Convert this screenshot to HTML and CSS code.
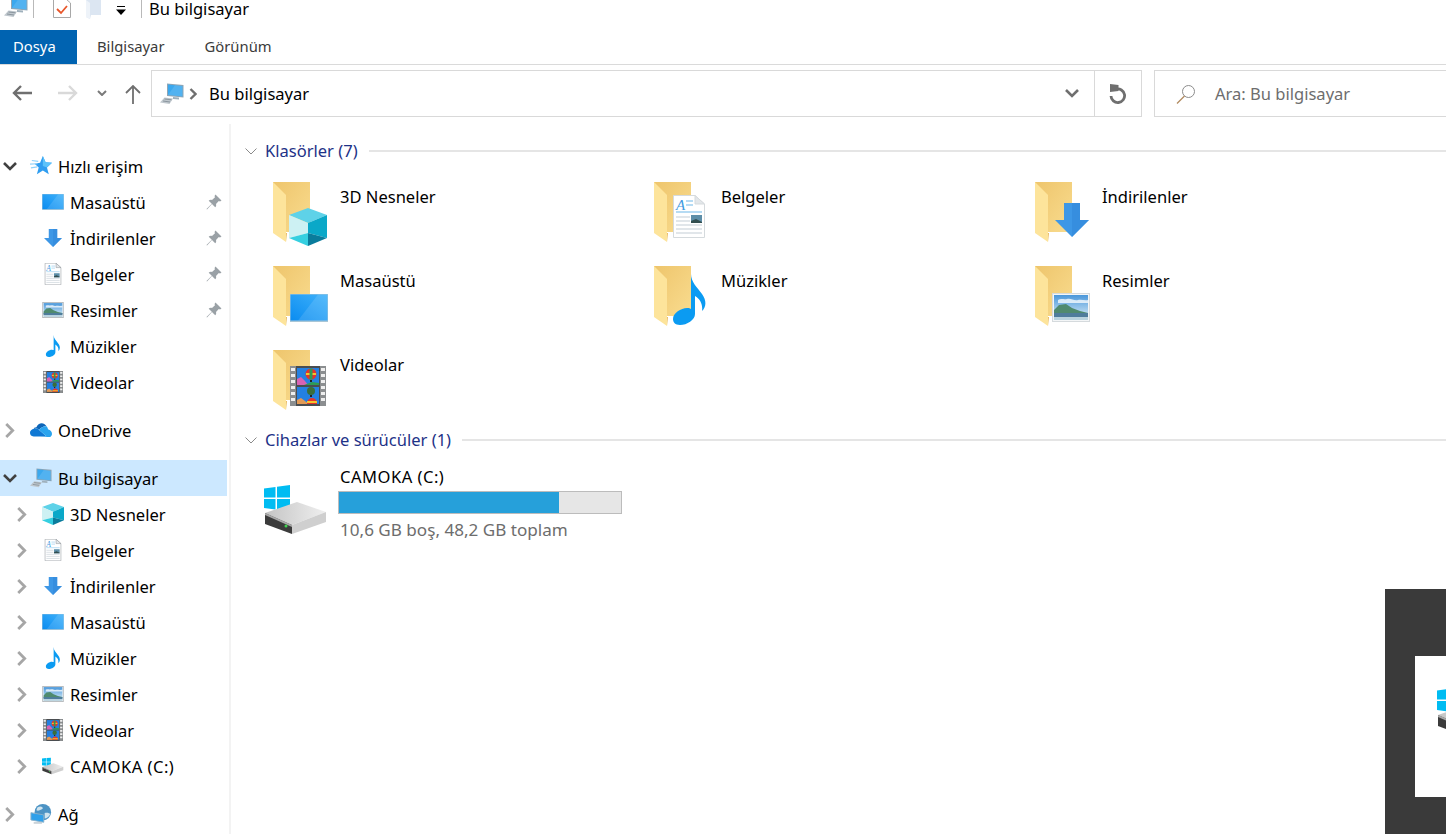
FILE: index.html
```html
<!DOCTYPE html>
<html lang="tr">

<head>
  <meta charset="UTF-8">
  <title>Bu bilgisayar</title>
  <link rel="stylesheet" href="styles.css">
</head>

<body>
  <!-- Shared icons -->
  <svg class="icon-defs" xmlns="http://www.w3.org/2000/svg">
    <defs>
      <linearGradient id="g-folder-back" x1="0" y1="0" x2="1" y2="1">
        <stop offset="0" stop-color="#eec56c" />
        <stop offset="1" stop-color="#f9dc8f" />
      </linearGradient>
      <linearGradient id="g-screen" x1="0" y1="1" x2="1" y2="0">
        <stop offset="0" stop-color="#0b8cf0" />
        <stop offset="1" stop-color="#3fb2fb" />
      </linearGradient>
      <linearGradient id="g-sky" x1="0" y1="0" x2="0" y2="1">
        <stop offset="0" stop-color="#4a97da" />
        <stop offset="1" stop-color="#e4f3fa" />
      </linearGradient>
      <linearGradient id="g-disk" x1="0" y1="0" x2="1" y2="0">
        <stop offset="0" stop-color="#c4c4c4" />
        <stop offset="1" stop-color="#efefef" />
      </linearGradient>
    </defs>
    <symbol id="folder" viewBox="0 0 58 66">
      <path d="M0 1H37V51H13V50L0 44Z" fill="url(#g-folder-back)" />
      <path d="M0 1L13 14V61L0 52Z" fill="#fde49b" />
      <path d="M13 14V61L14 52H13Z" fill="#e8b95e" />
    </symbol>
    <symbol id="cube" viewBox="0 0 38 38">
      <path d="M19 0L38 7L19 15L0 7Z" fill="#5ed2e8" />
      <path d="M0 7L19 15V25L0 30Z" fill="#cdf1f3" />
      <path d="M38 7L19 15V25L38 30Z" fill="#0aa8c8" />
      <path d="M0 30L19 25V38Z" fill="#35cfe0" />
      <path d="M38 30L19 25V38Z" fill="#0a7c9c" />
    </symbol>
    <symbol id="monitor" viewBox="0 0 38 28">
      <rect width="38" height="28" fill="#a9c6d6" />
      <rect x="0.5" y="0.5" width="37" height="26" fill="url(#g-screen)" />
      <path d="M8 26.500L28 0.500H37.500V26.500Z" fill="#fff" opacity="0.12" />
    </symbol>
    <symbol id="arrow-down" viewBox="0 0 34 34">
      <path d="M9 0H25V17H34L17 34L0 17H9Z" fill="#3d97e6" />
      <path d="M17 0H25V17H34L17 34Z" fill="#2f86d8" opacity="0.5" />
    </symbol>
    <symbol id="doc" viewBox="0 0 32 43">
      <path d="M0.500 0.500H22L31.500 9V42.500H0.500Z" fill="#fff" stroke="currentColor" />
      <path d="M22 0.500V9H31.500Z" fill="#e3e7ea" stroke="currentColor" />
      <text x="3" y="15" class="doc-letter">A</text>
      <path d="M13 6H20M13 10H20M3 17H29" stroke="#9fd0ef" stroke-width="1.400" />
      <path d="M3 22H17M3 26H17M3 30H29M3 34H29M3 38H29" stroke="#c4ced5" stroke-width="1.200" />
      <rect x="18" y="20" width="11" height="8" fill="#5d8ea8" />
      <path d="M18 26L23 24L29 27V28H18Z" fill="#324e4f" />
    </symbol>
    <symbol id="picture" viewBox="0 0 38 29">
      <rect x="0.500" y="0.500" width="37" height="28" fill="#f4f6f7" stroke="currentColor" />
      <rect x="2" y="2" width="34" height="25" fill="url(#g-sky)" />
      <path d="M6 7C9 5 12 7 15 6C19 5 22 8 26 7C29 6 33 8 36 7V10H6Z" fill="#fff" opacity="0.75" />
      <path d="M2 17L7 12L14 11L20 15L28 18L36 20V22H2Z" fill="#4f8a6e" />
      <rect x="2" y="20" width="34" height="4" fill="#4f7d9c" />
      <path d="M2 24H36V27H2Z" fill="#b9d3de" />
    </symbol>
    <symbol id="note" viewBox="0 0 33 51">
      <path d="M18 0C18 8 24 13 29 20C34 27 33 33 29 37C30 30 27 25 22 22V40C22 46 14 51 7 51C2 51 0 48 0 45C0 39 8 34 14 34C16 34 17.500 34.500 18 35Z" fill="#0b9bf2" />
    </symbol>
    <symbol id="film" viewBox="0 0 36 40">
      <rect width="36" height="40" fill="#4a4d50" />
      <rect width="6" height="40" fill="#8b8e90" />
      <rect x="30" width="6" height="40" fill="#8b8e90" />
      <path d="M1 2h4v3H1zM1 8h4v3H1zM1 14h4v3H1zM1 20h4v3H1zM1 26h4v3H1zM1 32h4v3H1zM31 2h4v3h-4zM31 8h4v3h-4zM31 14h4v3h-4zM31 20h4v3h-4zM31 26h4v3h-4zM31 32h4v3h-4z" fill="#eeeeee" />
      <rect x="7" y="2" width="22" height="17" fill="#2480e2" />
      <rect x="7" y="21" width="22" height="17" fill="#2480e2" />
      <path d="M7 19V13L11 11L15 15L18 19Z" fill="#d763b4" />
      <path d="M14 19L22 16L29 17V19Z" fill="#2f9a55" />
      <path d="M7 38V34L11 32L15 35L19 38Z" fill="#e39a56" />
      <circle cx="21" cy="8" r="5.500" fill="#e5342c" />
      <path d="M16 7H26V9H16Z" fill="#f2c62e" />
      <path d="M19.500 2.500H22.500V13.500H19.500Z" fill="#2f9a55" />
      <path d="M20 14H22V16H20Z" fill="#222" />
      <circle cx="21" cy="25" r="4" fill="#3b6e3a" />
      <path d="M20 29H22V31H20Z" fill="#222" />
      <circle cx="22" cy="37" r="5" fill="#e5342c" />
      <path d="M17 35H27V37H17Z" fill="#f2c62e" />
      <rect x="7" y="38" width="22" height="2" fill="#4a4d50" />
    </symbol>
    <symbol id="star" viewBox="0 0 24 22">
      <path d="M14 0L17 7L24 7.500L18.500 12.500L20.500 20L14 16L7.500 20L9.500 12.500L5 8.500L11 7.500Z" fill="#2f9df0" />
      <path d="M14 0L17 7L24 7.500L18.500 12.500L14 11Z" fill="#5cc2fa" />
      <path d="M0 9L8 8.500M1 13L8 12M2 5L9 6" stroke="#8fd2fa" stroke-width="1.200" />
    </symbol>
    <symbol id="pin" viewBox="0 0 16 16">
      <path d="M9.500 0.500L15.500 6.500L14 7.500L12.800 7L10 10C10.500 11.500 10 12.500 9.200 13.300L6 10L1 15.500L0.500 15L5.800 9.800L2.700 6.800C3.500 6 4.500 5.500 6 6L9 3.200L8.500 2Z" fill="#9aa1a6" />
    </symbol>
    <symbol id="cloud" viewBox="0 0 24 16">
      <path d="M7 5C9 0 15 -1 18 4C14 4 11 6 10 8C8 6 6 6 4 7C4 6 5 5 7 5Z" fill="#0d65b8" />
      <path d="M4 7C6 6 8 6 10 8L18 15H4C1 15 0 13 0 11C0 9 2 7 4 7Z" fill="#0f78d4" />
      <path d="M10 8C11 6 14 4 18 4C20 6 19 7 20 7.500C22 8 24 10 24 12C24 14 23 15 22 15.500H11L18 15Z" fill="#2aa4ee" />
    </symbol>
    <symbol id="computer" viewBox="0 0 24 22">
      <path d="M7 0.500L23.500 2V14.500L7 13Z" fill="#8fa5b5" />
      <path d="M8 1.500L22.500 3V13.500L8 12Z" fill="#3ba8ee" />
      <path d="M8 12L15 2.200L22.500 3V13.500Z" fill="#fff" opacity="0.12" />
      <path d="M13 14L19 14.600V16.500L13 15.900Z" fill="#9fb0bc" />
      <path d="M4.500 14.500L13 15.500L9.500 21L0 19.500Z" fill="#bfc7cd" />
      <path d="M4.500 16L11.500 16.800M3 18L10 19" stroke="#8b969e" />
    </symbol>
    <symbol id="winlogo" viewBox="0 0 26 26">
      <path d="M0 3.500L11.500 2V12.500H0ZM13 1.800L26 0V12.500H13ZM0 14H11.500V24.500L0 23ZM13 14H26V26L13 24.700Z" fill="#00bcf2" />
    </symbol>
    <symbol id="drive" viewBox="0 0 64 52">
      <use href="#winlogo" x="0" y="1" width="26" height="26" />
      <path d="M1 29L33 18L62 28L28 41Z" fill="url(#g-disk)" />
      <path d="M1 29L28 41V50L1 40Z" fill="#3b3b3b" />
      <path d="M28 41L62 28V38L28 50Z" fill="#cfcfcf" />
      <path d="M1 29L28 41V43L1 31Z" fill="#a8a8a8" />
      <circle cx="22" cy="42" r="1.500" fill="#3ed34f" />
    </symbol>
    <symbol id="network" viewBox="0 0 24 22">
      <circle cx="14" cy="9" r="9" fill="#4c93c4" />
      <path d="M8 4C11 2 14 3 14 5C11 7 9 8 7 7ZM16 10C19 9 21 10 22 11C21 14 18 16 16 16Z" fill="#cfe4ef" />
      <path d="M1 9.500L15 12V20L1 17.500Z" fill="#2fa0ea" stroke="#8ab0c8" />
      <path d="M4 20H13V21.500H4Z" fill="#b9c4cc" />
    </symbol>
  </svg>

  <!-- Title bar -->
  <header class="title-bar">
    <svg class="qa-computer" viewBox="0 0 24 18"><use href="#computer" y="-4" width="24" height="22" /></svg>
    <span class="qa-sep"></span>
    <svg class="qa-check" viewBox="0 0 18 18">
      <path d="M0.500 -1H13L17.500 3V17.500H0.500Z" fill="#fff" stroke="#a8a8a8" />
      <path d="M4 9L8 13L14 6" fill="none" stroke="#e8562a" stroke-width="1.800" />
    </svg>
    <svg class="qa-folder" viewBox="0 0 15 20">
      <path d="M0 0H15V15H5L4 19L0 17Z" fill="#dce6f2" />
      <path d="M0 0L4 3V19L0 17Z" fill="#eef3f9" />
    </svg>
    <svg class="qa-drop" viewBox="0 0 12 10">
      <path d="M2 0.500H10" stroke="#000" />
      <path d="M1 3.500H11L6 9Z" fill="#000" />
    </svg>
    <span class="qa-sep qa-sep-last"></span>
    <span class="title-text">Bu bilgisayar</span>
  </header>

  <!-- Ribbon tabs -->
  <nav class="ribbon">
    <a class="ribbon-tab ribbon-file">Dosya</a>
    <a class="ribbon-tab">Bilgisayar</a>
    <a class="ribbon-tab">Görünüm</a>
  </nav>

  <!-- Address row -->
  <div class="address-row">
    <div class="nav-buttons">
      <svg class="nav-back" viewBox="0 0 20 16"><path d="M9 1L2 8L9 15M2 8H20" fill="none" stroke="#6f6f6f" stroke-width="2.400" /></svg>
      <svg class="nav-forward" viewBox="0 0 20 16"><path d="M11 1L18 8L11 15M18 8H0" fill="none" stroke="#d9d9d9" stroke-width="2.400" /></svg>
      <svg class="nav-recent" viewBox="0 0 10 6"><path d="M1 1L5 5L9 1" fill="none" stroke="#7a7a7a" stroke-width="2" /></svg>
      <svg class="nav-up" viewBox="0 0 16 19"><path d="M1 8L8 1L15 8M8 1V19" fill="none" stroke="#6f6f6f" stroke-width="1.800" /></svg>
    </div>
    <div class="address-box">
      <svg class="address-icon"><use href="#computer" /></svg>
      <svg class="crumb-arrow" viewBox="0 0 8 12"><path d="M1.500 1L6.500 6L1.500 11" fill="none" stroke="#6f6f6f" stroke-width="2.400" /></svg>
      <span class="address-text">Bu bilgisayar</span>
      <svg class="address-drop" viewBox="0 0 14 9"><path d="M1 1L7 7L13 1" fill="none" stroke="#6f6f6f" stroke-width="2.600" /></svg>
      <span class="address-refresh">
        <svg viewBox="0 0 18 20"><path d="M7 5.200A6.800 6.800 0 1 1 2 12" fill="none" stroke="#6f6f6f" stroke-width="2.800" /><path d="M1 0L9.500 1V7L1 8Z" fill="#6f6f6f" /></svg>
      </span>
    </div>
    <div class="search-box">
      <svg viewBox="0 0 20 20"><circle cx="12.500" cy="7.500" r="6" fill="none" stroke="#8c8c8c" /><path d="M8.500 12L1 19.500" stroke="#b08a5f" stroke-width="1.200" /></svg>
      <span>Ara: Bu bilgisayar</span>
    </div>
  </div>

  <div class="explorer">
    <!-- Navigation tree -->
    <aside class="sidebar">
      <section class="tree-group">
        <div class="tree-row">
          <svg class="chev chev-open" viewBox="0 0 14 9"><path d="M1 1L7 7L13 1" /></svg>
          <svg class="tree-icon"><use href="#star" /></svg>
          <span>Hızlı erişim</span>
        </div>
        <div class="tree-row tree-child">
          <i class="chev-space"></i>
          <svg class="tree-icon" viewBox="0 0 22 16"><use href="#monitor" width="22" height="16" /></svg>
          <span>Masaüstü</span>
          <svg class="pin"><use href="#pin" /></svg>
        </div>
        <div class="tree-row tree-child">
          <i class="chev-space"></i>
          <svg class="tree-icon" viewBox="0 0 22 20"><use href="#arrow-down" x="2" width="18" height="20" /></svg>
          <span>İndirilenler</span>
          <svg class="pin"><use href="#pin" /></svg>
        </div>
        <div class="tree-row tree-child">
          <i class="chev-space"></i>
          <svg class="tree-icon" viewBox="0 0 22 22"><use href="#doc" x="2" width="18" height="22" /></svg>
          <span>Belgeler</span>
          <svg class="pin"><use href="#pin" /></svg>
        </div>
        <div class="tree-row tree-child">
          <i class="chev-space"></i>
          <svg class="tree-icon" viewBox="0 0 22 16"><use href="#picture" width="22" height="16" /></svg>
          <span>Resimler</span>
          <svg class="pin"><use href="#pin" /></svg>
        </div>
        <div class="tree-row tree-child">
          <i class="chev-space"></i>
          <svg class="tree-icon" viewBox="0 0 22 22"><use href="#note" x="3" width="16" height="22" /></svg>
          <span>Müzikler</span>
        </div>
        <div class="tree-row tree-child">
          <i class="chev-space"></i>
          <svg class="tree-icon"><use href="#film" /></svg>
          <span>Videolar</span>
        </div>
      </section>

      <section class="tree-group">
        <div class="tree-row">
          <svg class="chev" viewBox="0 0 9 14"><path d="M1 1L7 7L1 13" /></svg>
          <svg class="tree-icon" viewBox="0 0 24 22"><use href="#cloud" y="3" width="24" height="16" /></svg>
          <span>OneDrive</span>
        </div>
      </section>

      <section class="tree-group">
        <div class="tree-row tree-selected">
          <svg class="chev chev-open" viewBox="0 0 14 9"><path d="M1 1L7 7L13 1" /></svg>
          <svg class="tree-icon"><use href="#computer" /></svg>
          <span>Bu bilgisayar</span>
        </div>
        <div class="tree-row tree-child">
          <svg class="chev" viewBox="0 0 9 14"><path d="M1 1L7 7L1 13" /></svg>
          <svg class="tree-icon" viewBox="0 0 22 22"><use href="#cube" width="22" height="22" /></svg>
          <span>3D Nesneler</span>
        </div>
        <div class="tree-row tree-child">
          <svg class="chev" viewBox="0 0 9 14"><path d="M1 1L7 7L1 13" /></svg>
          <svg class="tree-icon" viewBox="0 0 22 22"><use href="#doc" x="2" width="18" height="22" /></svg>
          <span>Belgeler</span>
        </div>
        <div class="tree-row tree-child">
          <svg class="chev" viewBox="0 0 9 14"><path d="M1 1L7 7L1 13" /></svg>
          <svg class="tree-icon" viewBox="0 0 22 20"><use href="#arrow-down" x="2" width="18" height="20" /></svg>
          <span>İndirilenler</span>
        </div>
        <div class="tree-row tree-child">
          <svg class="chev" viewBox="0 0 9 14"><path d="M1 1L7 7L1 13" /></svg>
          <svg class="tree-icon" viewBox="0 0 22 16"><use href="#monitor" width="22" height="16" /></svg>
          <span>Masaüstü</span>
        </div>
        <div class="tree-row tree-child">
          <svg class="chev" viewBox="0 0 9 14"><path d="M1 1L7 7L1 13" /></svg>
          <svg class="tree-icon" viewBox="0 0 22 22"><use href="#note" x="3" width="16" height="22" /></svg>
          <span>Müzikler</span>
        </div>
        <div class="tree-row tree-child">
          <svg class="chev" viewBox="0 0 9 14"><path d="M1 1L7 7L1 13" /></svg>
          <svg class="tree-icon" viewBox="0 0 22 16"><use href="#picture" width="22" height="16" /></svg>
          <span>Resimler</span>
        </div>
        <div class="tree-row tree-child">
          <svg class="chev" viewBox="0 0 9 14"><path d="M1 1L7 7L1 13" /></svg>
          <svg class="tree-icon"><use href="#film" /></svg>
          <span>Videolar</span>
        </div>
        <div class="tree-row tree-child">
          <svg class="chev" viewBox="0 0 9 14"><path d="M1 1L7 7L1 13" /></svg>
          <svg class="tree-icon" viewBox="0 0 22 18"><use href="#drive" width="22" height="18" /></svg>
          <span class="drive-label">CAMOKA (C:)</span>
        </div>
      </section>

      <section class="tree-group">
        <div class="tree-row">
          <svg class="chev" viewBox="0 0 9 14"><path d="M1 1L7 7L1 13" /></svg>
          <svg class="tree-icon"><use href="#network" /></svg>
          <span>Ağ</span>
        </div>
      </section>
    </aside>

    <!-- Folder view -->
    <main class="content">
      <div class="group-head">
        <svg viewBox="0 0 12 7"><path d="M0.500 0.500L6 6L11.500 0.500" /></svg>
        <span>Klasörler (7)</span>
        <i></i>
      </div>
      <div class="tile-grid">
        <div class="tile">
          <svg class="folder-icon" viewBox="0 0 58 66"><use href="#folder" /><use href="#cube" x="16" y="27" width="38" height="38" /></svg>
          <span>3D Nesneler</span>
        </div>
        <div class="tile">
          <svg class="folder-icon" viewBox="0 0 58 66"><use href="#folder" /><use href="#doc" x="19" y="14" width="32" height="43" /></svg>
          <span>Belgeler</span>
        </div>
        <div class="tile">
          <svg class="folder-icon" viewBox="0 0 58 66"><use href="#folder" /><use href="#arrow-down" x="20" y="22" width="34" height="34" /></svg>
          <span>İndirilenler</span>
        </div>
        <div class="tile">
          <svg class="folder-icon" viewBox="0 0 58 66"><use href="#folder" /><use href="#monitor" x="17" y="29" width="38" height="28" /></svg>
          <span>Masaüstü</span>
        </div>
        <div class="tile">
          <svg class="folder-icon" viewBox="0 0 58 66"><use href="#folder" /><use href="#note" x="19" y="9" width="33" height="51" /></svg>
          <span>Müzikler</span>
        </div>
        <div class="tile">
          <svg class="folder-icon" viewBox="0 0 58 66"><use href="#folder" /><use href="#picture" x="17" y="28" width="38" height="29" /></svg>
          <span>Resimler</span>
        </div>
        <div class="tile">
          <svg class="folder-icon" viewBox="0 0 58 66"><use href="#folder" /><use href="#film" x="17" y="17" width="36" height="40" /></svg>
          <span>Videolar</span>
        </div>
      </div>

      <div class="group-head">
        <svg viewBox="0 0 12 7"><path d="M0.500 0.500L6 6L11.500 0.500" /></svg>
        <span>Cihazlar ve sürücüler (1)</span>
        <i></i>
      </div>
      <div class="drive-tile">
        <svg class="drive-icon"><use href="#drive" /></svg>
        <div class="drive-info">
          <div class="drive-name drive-label">CAMOKA (C:)</div>
          <div class="drive-bar"><div class="drive-used" style="width: 78%"></div></div>
          <div class="drive-free">10,6 GB boş, 48,2 GB toplam</div>
        </div>
      </div>
    </main>
  </div>

  <!-- Thumbnail of another window, cut off by the screen edge -->
  <div class="thumb">
    <div class="thumb-page">
      <svg class="thumb-logo"><use href="#drive" /></svg>
    </div>
  </div>
</body>

</html>
```
FILE: styles.css
```css
* {
  box-sizing: border-box;
}

html,
body {
  margin: 0;
  height: 834px;
  overflow: hidden;
}

body {
  position: relative;
  width: 1446px;
  background: #fff;
  color: #000;
  font-family: "Noto Sans", sans-serif;
  font-size: 16.55px;
}

svg {
  display: block;
  flex: none;
}

.icon-defs {
  position: absolute;
  width: 0;
  height: 0;
}

.doc-letter {
  font-family: "Liberation Serif", serif;
  font-style: italic;
  font-size: 15px;
  fill: #3f9be0;
}

/* Title bar */
.title-bar {
  display: flex;
  align-items: flex-start;
  height: 30px;
  overflow: hidden;
}

.qa-computer {
  width: 24px;
  height: 18px;
  margin-left: 4px;
}

.qa-sep {
  width: 1px;
  height: 18px;
  margin-left: 5px;
  background: #b9b9b9;
}

.qa-check {
  width: 18px;
  height: 18px;
  margin-left: 19px;
}

.qa-folder {
  width: 15px;
  height: 20px;
  margin-left: 15px;
}

.qa-drop {
  width: 12px;
  height: 10px;
  margin: 6px 0 0 14px;
}

.qa-sep-last {
  margin-left: 14px;
}

.title-text {
  margin-left: 7px;
  line-height: 18px;
}

/* Ribbon */
.ribbon {
  display: flex;
  height: 35px;
  border-bottom: 1px solid #dadada;
  font-size: 14.8px;
}

.ribbon-tab {
  display: flex;
  align-items: center;
  padding: 0 20px 2px;
  height: 34px;
  color: #3b3b3b;
}

.ribbon-file {
  width: 77px;
  padding: 0 0 2px 13px;
  background: #0063b1;
  color: #fff;
}

/* Address row */
.address-row {
  display: flex;
  height: 59px;
  padding-top: 5px;
}

.nav-buttons {
  flex: none;
  display: flex;
  align-items: flex-start;
  width: 151px;
  height: 46px;
  padding: 15px 0 0 12px;
}

.nav-back,
.nav-forward {
  width: 20px;
  height: 16px;
}

.nav-forward {
  margin-left: 26px;
}

.nav-recent {
  width: 10px;
  height: 6px;
  margin: 5px 0 0 19px;
}

.nav-up {
  width: 16px;
  height: 19px;
  margin: 0 0 0 18px;
}

.address-box {
  flex: none;
  display: flex;
  align-items: center;
  width: 991px;
  height: 47px;
  padding-left: 8px;
  border: 1px solid #d9d9d9;
}

.address-icon {
  width: 24px;
  height: 22px;
}

.crumb-arrow {
  width: 8px;
  height: 12px;
  margin-left: 5px;
}

.address-text {
  margin-left: 12px;
}

.address-drop {
  width: 14px;
  height: 9px;
  margin-left: auto;
  margin-right: 15px;
}

.address-refresh {
  display: flex;
  align-items: center;
  justify-content: center;
  width: 47px;
  height: 45px;
  border-left: 1px solid #d9d9d9;
}

.address-refresh svg {
  width: 18px;
  height: 20px;
}

.search-box {
  flex: none;
  display: flex;
  align-items: center;
  width: 320px;
  height: 47px;
  margin-left: 12px;
  padding-left: 21px;
  border: 1px solid #d9d9d9;
  color: #6d6d6d;
}

.search-box svg {
  width: 20px;
  height: 20px;
  margin-right: 19px;
}

/* Main area */
.explorer {
  display: flex;
  height: 710px;
}

.sidebar {
  flex: none;
  width: 231px;
  padding-top: 24px;
  border-right: 2px solid #f3f3f3;
}

.tree-group {
  margin-bottom: 12px;
}

.tree-row {
  display: flex;
  align-items: center;
  width: 227px;
  height: 36px;
  padding-left: 5px;
}

.tree-child {
  padding-left: 17px;
}

.tree-selected {
  background: #cce8ff;
}

.chev,
.chev-space {
  width: 10px;
  height: 15px;
  margin-right: 15px;
}

.chev path {
  fill: none;
  stroke: #a6a6a6;
  stroke-width: 2.6;
}

.chev-open {
  width: 14px;
  height: 9px;
  margin-left: -2px;
  margin-right: 13px;
}

.chev-open path {
  stroke: #404040;
}

.tree-icon {
  width: 22px;
  height: 22px;
  margin-right: 6px;
  color: #8b9196;
}

.pin {
  width: 16px;
  height: 16px;
  margin-left: auto;
  margin-right: 5px;
}

/* Content */
.content {
  flex: 1;
  min-width: 0;
  padding-top: 15px;
}

.group-head {
  display: flex;
  align-items: center;
  height: 24px;
  padding-left: 14px;
  color: #1e3287;
}

.group-head span {
  margin-top: -2px;
}

.group-head svg {
  width: 12px;
  height: 7px;
  margin-right: 8px;
}

.group-head path {
  fill: none;
  stroke: #8a8a8a;
}

.group-head i {
  flex: 1;
  height: 2px;
  margin-left: 11px;
  background: #e5e5e5;
}

.tile-grid {
  display: grid;
  grid-template-columns: repeat(3, 381px);
  grid-auto-rows: 84px;
  margin-top: 2px;
  margin-bottom: 11px;
  padding-left: 42px;
}

.tile {
  display: flex;
  padding-top: 16px;
}

.folder-icon {
  width: 58px;
  height: 66px;
  color: #d5dadd;
}

.tile span {
  margin-left: 9px;
  line-height: 32px;
}

.drive-tile {
  display: flex;
  padding-left: 33px;
}

.drive-icon {
  width: 64px;
  height: 52px;
  margin-top: 32px;
}

.drive-info {
  margin-left: 10px;
  padding-top: 13px;
}

.drive-label {
  letter-spacing: 0.5px;
}

.drive-name {
  padding-left: 2px;
  line-height: 24px;
}

.drive-bar {
  width: 284px;
  height: 23px;
  margin-top: 2px;
  border: 1px solid #bcbcbc;
  background: #e6e6e6;
}

.drive-used {
  height: 100%;
  background: #26a0da;
}

.drive-free {
  padding-left: 2px;
  margin-top: 4px;
  line-height: 24px;
  font-size: 17.1px;
  color: #6d6d6d;
}

/* Thumbnail */
.thumb {
  position: absolute;
  right: 0;
  bottom: 0;
  width: 61px;
  height: 245px;
  padding: 67px 0 0 30px;
  background: #3a3a3a;
}

.thumb-page {
  height: 141px;
  padding: 30px 0 0 22px;
  background: #fff;
  overflow: hidden;
}

.thumb-logo {
  width: 64px;
  height: 52px;
}
```
